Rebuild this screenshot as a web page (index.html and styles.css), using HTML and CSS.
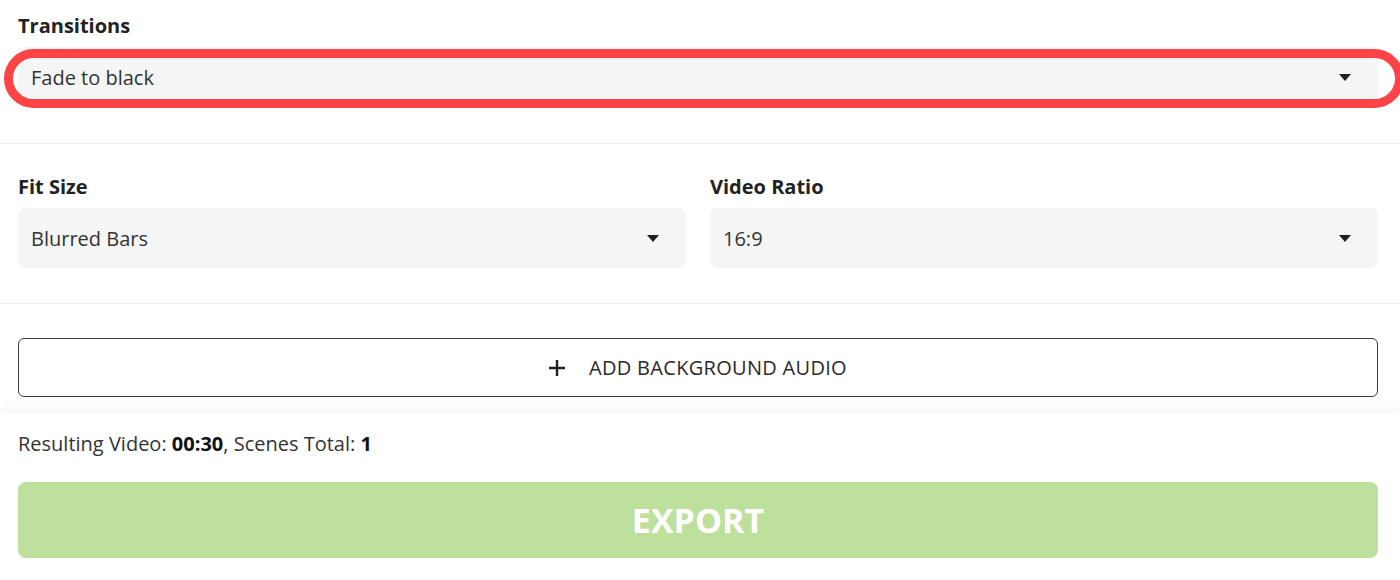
FILE: index.html
```html
<!DOCTYPE html>
<html lang="en">
<head>
  <meta charset="UTF-8" />
  <meta name="viewport" content="width=device-width, initial-scale=1.0"/>
  <title>Export Settings</title>
  <link rel="stylesheet" href="styles.css">
</head>
<body>
  <main class="settings">
    <section class="bloco bloco-topo">
      <label class="rotulo">Transitions</label>
      <div class="campo">
        <div class="select">
          <span>Fade to black</span>
          <svg class="seta" width="12" height="7" viewBox="0 0 12 7"><path d="M0 0h12L6 7z" fill="#1f1f1f"/></svg>
        </div>
        <div class="destaque"></div>
      </div>
    </section>

    <section class="bloco">
      <div class="grade">
        <div>
          <label class="rotulo">Fit Size</label>
          <div class="select">
            <span>Blurred Bars</span>
            <svg class="seta" width="12" height="7" viewBox="0 0 12 7"><path d="M0 0h12L6 7z" fill="#1f1f1f"/></svg>
          </div>
        </div>
        <div>
          <label class="rotulo">Video Ratio</label>
          <div class="select">
            <span>16:9</span>
            <svg class="seta" width="12" height="7" viewBox="0 0 12 7"><path d="M0 0h12L6 7z" fill="#1f1f1f"/></svg>
          </div>
        </div>
      </div>
    </section>

    <section class="bloco bloco-audio">
      <button class="btn-audio">
        <svg width="16" height="16" viewBox="0 0 16 16"><path d="M8 0v16M0 8h16" stroke="#222" stroke-width="2.4"/></svg>
        <span>ADD BACKGROUND AUDIO</span>
      </button>
    </section>
  </main>

  <footer class="rodape">
    <p class="resumo">Resulting Video: <b>00:30</b>, Scenes Total: <b>1</b></p>
    <button class="btn-export">EXPORT</button>
  </footer>
</body>
</html>
```

FILE: styles.css
```css
body {
  margin: 0;
  font-family: "Open Sans", "Noto Sans", sans-serif;
  background-color: #fff;
  color: #333;
  overflow: hidden;
}
.bloco {
  padding: 30px 22px 35px 18px;
  border-bottom: 1px solid #ececec;
}
.bloco-topo {
  padding-top: 13px;
  padding-bottom: 36px;
}
.bloco-audio {
  padding-top: 34px;
  padding-bottom: 16px;
  border-bottom: none;
}
.rotulo {
  display: block;
  font-size: 20px;
  line-height: 26px;
  font-weight: 700;
  color: #222;
  margin-bottom: 8px;
}
.campo {
  position: relative;
}
.select {
  display: flex;
  align-items: center;
  justify-content: space-between;
  height: 60px;
  padding: 0 27px 0 13px;
  background-color: #f5f5f5;
  border-radius: 8px;
  font-size: 20px;
  color: #333;
}
.seta {
  display: block;
}
.destaque {
  position: absolute;
  left: -14px;
  top: 2px;
  right: -26px;
  height: 59px;
  box-sizing: border-box;
  border: 9px solid #ff4447;
  border-radius: 30px;
  pointer-events: none;
}
.grade {
  display: grid;
  grid-template-columns: 1fr 1fr;
  gap: 24px;
}
.btn-audio {
  display: flex;
  align-items: center;
  justify-content: center;
  gap: 24px;
  width: 100%;
  height: 59px;
  background: #fff;
  border: 1px solid #3a3a3a;
  border-radius: 6px;
  font-family: inherit;
  font-size: 20px;
  letter-spacing: 0.3px;
  color: #2a2a2a;
  cursor: pointer;
}
.btn-audio svg {
  display: block;
}
.rodape {
  padding: 18px 22px 22px 18px;
  box-shadow: 0 -6px 12px rgba(0, 0, 0, 0.035);
  position: relative;
}
.resumo {
  margin: 0 0 25px;
  font-size: 20px;
  line-height: 26px;
  color: #333;
}
.resumo b {
  color: #111;
}
.btn-export {
  display: block;
  width: 100%;
  height: 76px;
  background-color: #bde09c;
  border: none;
  border-radius: 8px;
  font-family: inherit;
  font-size: 34px;
  font-weight: 700;
  color: #fff;
  cursor: pointer;
}
```
